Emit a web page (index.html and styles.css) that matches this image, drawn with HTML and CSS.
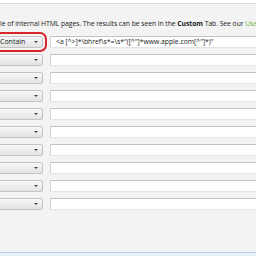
FILE: index.html
```html
<!DOCTYPE html>
<html lang="en">
  <head>
    <meta charset="UTF-8" />
    <title>Custom Search</title>
    <link rel="stylesheet" href="styles.css">
  </head>
  <body>
    <div id="window">
      <div class="topbar"></div>

      <p class="intro">le of internal HTML pages. The results can be seen in the <b>Custom</b> Tab. See our <span class="link">Use</span></p>

      <div id="filters">
        <div class="row">
          <div class="select highlight">Contain<span class="arrow"></span></div>
          <div class="field">&lt;a [^&gt;]*\bhref\s*=\s*"([^"]*www.apple.com[^"]*)"</div>
        </div>
        <div class="row"><div class="select"><span class="arrow"></span></div><div class="field"></div></div>
        <div class="row"><div class="select"><span class="arrow"></span></div><div class="field"></div></div>
        <div class="row"><div class="select"><span class="arrow"></span></div><div class="field"></div></div>
        <div class="row"><div class="select"><span class="arrow"></span></div><div class="field"></div></div>
        <div class="row"><div class="select"><span class="arrow"></span></div><div class="field"></div></div>
        <div class="row"><div class="select"><span class="arrow"></span></div><div class="field"></div></div>
        <div class="row"><div class="select"><span class="arrow"></span></div><div class="field"></div></div>
        <div class="row"><div class="select"><span class="arrow"></span></div><div class="field"></div></div>
        <div class="row"><div class="select"><span class="arrow"></span></div><div class="field"></div></div>
      </div>

      <div class="spacer"></div>
      <div class="statusbar"></div>
    </div>
  </body>
</html>
```

FILE: styles.css
```css
/* Reset */
* {
  margin: 0;
  padding: 0;
  box-sizing: border-box;
}

body {
  width: 256px;
  height: 256px;
  overflow: hidden;
  background-color: #f3f3f3;
  font-family: 'Open Sans', 'Noto Sans', sans-serif;
  color: #1a1a1a;
}

#window {
  height: 256px;
  display: flex;
  flex-direction: column;
}

.topbar {
  height: 4px;
  background-color: #ffffff;
  border-bottom: 1px solid #d3dfea;
}

.intro {
  margin-top: 15px;
  height: 10px;
  font-size: 6.8px;
  line-height: 10px;
  letter-spacing: -0.05px;
  white-space: nowrap;
  overflow: hidden;
}

.intro b {
  font-weight: 700;
}

.link {
  color: #6cb33f;
}

/* Filter rows */
#filters {
  margin-top: 7px;
  display: flex;
  flex-direction: column;
  gap: 6px;
}

.row {
  display: flex;
  align-items: center;
  gap: 7px;
  height: 12px;
}

.select {
  position: relative;
  flex: none;
  width: 56px;
  height: 12px;
  margin-left: -13px;
  padding-left: 12px;
  border: 1px solid #c4c4c4;
  border-radius: 2px;
  background: linear-gradient(#f8f8f8, #e2e2e2);
  font-size: 7px;
  line-height: 10px;
  white-space: nowrap;
}

.select.highlight {
  outline: 2px solid #d8232a;
  outline-offset: 2px;
  border-radius: 3px;
}

.arrow {
  position: absolute;
  right: 4px;
  top: 4px;
  border-left: 2px solid transparent;
  border-right: 2px solid transparent;
  border-top: 2px solid #444;
}

.field {
  flex: 1;
  height: 12px;
  margin-right: -10px;
  padding-left: 5px;
  background-color: #ffffff;
  border: 1px solid #d4d4d4;
  border-top-color: #c2c2c2;
  border-bottom-color: #e4e4e4;
  font-size: 6.8px;
  line-height: 10px;
  white-space: nowrap;
  overflow: hidden;
}

.spacer {
  flex: 1;
}

.statusbar {
  height: 4px;
  border-top: 1px solid #b9d1ea;
  background-color: #e6eff8;
}
```
